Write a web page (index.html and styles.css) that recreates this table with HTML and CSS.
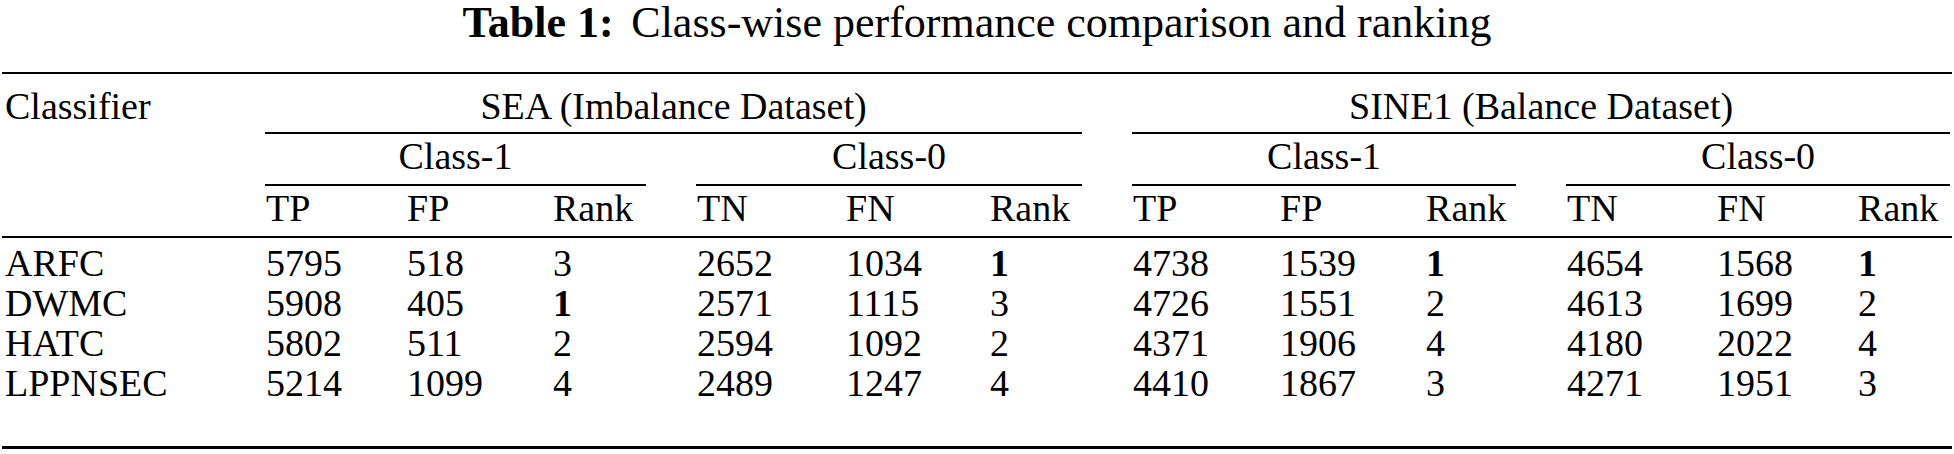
FILE: index.html
```html
<!DOCTYPE html>
<html lang="en">
  <head>
    <meta charset="UTF-8" />
    <meta name="viewport" content="width=device-width, initial-scale=1.0" />
    <title>Table 1</title>

    <link rel="stylesheet" href="styles.css">
  </head>
  <body>
    <p class="caption"><b class="caption-label">Table 1:</b>Class-wise performance comparison and ranking</p>

    <table class="results">
      <colgroup>
        <col><col><col><col><col><col><col><col><col><col><col><col><col>
      </colgroup>
      <thead>
        <tr>
          <th class="name-head" rowspan="3">Classifier</th>
          <th class="group-head" colspan="6"><div class="rule">SEA (Imbalance Dataset)</div></th>
          <th class="group-head" colspan="6"><div class="rule last">SINE1 (Balance Dataset)</div></th>
        </tr>
        <tr>
          <th class="sub-head" colspan="3"><div class="rule">Class-1</div></th>
          <th class="sub-head" colspan="3"><div class="rule">Class-0</div></th>
          <th class="sub-head" colspan="3"><div class="rule">Class-1</div></th>
          <th class="sub-head" colspan="3"><div class="rule last">Class-0</div></th>
        </tr>
        <tr class="metric-row">
          <th>TP</th><th>FP</th><th>Rank</th>
          <th>TN</th><th>FN</th><th>Rank</th>
          <th>TP</th><th>FP</th><th>Rank</th>
          <th>TN</th><th>FN</th><th>Rank</th>
        </tr>
      </thead>
      <tbody>
        <tr>
          <td>ARFC</td>
          <td>5795</td><td>518</td><td>3</td>
          <td>2652</td><td>1034</td><td><b>1</b></td>
          <td>4738</td><td>1539</td><td><b>1</b></td>
          <td>4654</td><td>1568</td><td><b>1</b></td>
        </tr>
        <tr>
          <td>DWMC</td>
          <td>5908</td><td>405</td><td><b>1</b></td>
          <td>2571</td><td>1115</td><td>3</td>
          <td>4726</td><td>1551</td><td>2</td>
          <td>4613</td><td>1699</td><td>2</td>
        </tr>
        <tr>
          <td>HATC</td>
          <td>5802</td><td>511</td><td>2</td>
          <td>2594</td><td>1092</td><td>2</td>
          <td>4371</td><td>1906</td><td>4</td>
          <td>4180</td><td>2022</td><td>4</td>
        </tr>
        <tr>
          <td>LPPNSEC</td>
          <td>5214</td><td>1099</td><td>4</td>
          <td>2489</td><td>1247</td><td>4</td>
          <td>4410</td><td>1867</td><td>3</td>
          <td>4271</td><td>1951</td><td>3</td>
        </tr>
      </tbody>
    </table>
  </body>
</html>
```

FILE: styles.css
```css
body {
  margin: 0;
  background-color: #fff;
  color: #000;
  font-family: "Liberation Serif", Tinos, "Times New Roman", Times, "DejaVu Serif", "Noto Serif", serif;
}

.caption {
  margin: 0;
  height: 48px;
  font-size: 44px;
  line-height: 46px;
  text-align: center;
}

.caption-label {
  margin-right: 0.4em;
}

.results {
  margin: 24px 0 0 2px;
  width: 1950px;
  table-layout: fixed;
  border-collapse: separate;
  border-spacing: 0;
  border-top: 2px solid #000;
  border-bottom: 3px solid #000;
  font-family: inherit;
  font-size: 38px;
  line-height: 40px;
}

.results col:nth-child(1) { width: 261px; }
.results col:nth-child(2) { width: 141px; }
.results col:nth-child(3) { width: 146px; }
.results col:nth-child(4) { width: 144px; }
.results col:nth-child(5) { width: 149px; }
.results col:nth-child(6) { width: 144px; }
.results col:nth-child(7) { width: 143px; }
.results col:nth-child(8) { width: 147px; }
.results col:nth-child(9) { width: 146px; }
.results col:nth-child(10) { width: 141px; }
.results col:nth-child(11) { width: 150px; }
.results col:nth-child(12) { width: 141px; }
.results col:nth-child(13) { width: 97px; }

.results th,
.results td {
  padding: 0 0 0 3px;
  font-weight: normal;
  text-align: left;
  vertical-align: top;
  white-space: nowrap;
}

.results b {
  font-weight: bold;
}

.name-head {
  padding-top: 12px !important;
  border-bottom: 2px solid #000;
}

.group-head {
  padding: 12px 0 0 0 !important;
}

.sub-head {
  padding: 2px 0 0 0 !important;
}

.rule {
  margin: 0 48px 0 2px;
  border-bottom: 2px solid #000;
  text-align: center;
}

.rule.last {
  margin-right: 2px;
}

.group-head .rule {
  padding-bottom: 6px;
}

.sub-head .rule {
  padding-bottom: 8px;
}

.metric-row th {
  padding: 2px 0 8px 3px;
  border-bottom: 2px solid #000;
}

.results tbody tr:first-child td {
  padding-top: 5px;
}

.results tbody tr:last-child td {
  padding-bottom: 43px;
}
```
